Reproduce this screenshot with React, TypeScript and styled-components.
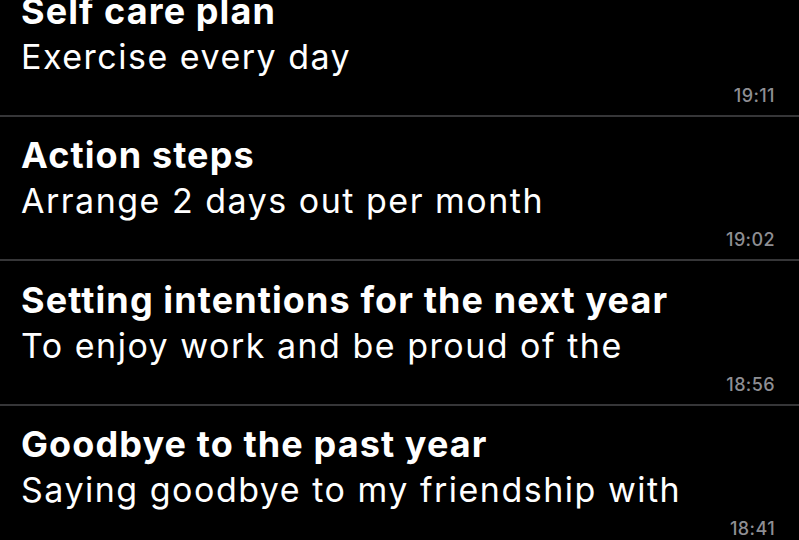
import React from 'react';
import styled, { createGlobalStyle } from 'styled-components';

type Note = {
  title: string;
  preview: string;
  time: string;
};

const notes: Note[] = [
  { title: 'Self care plan', preview: 'Exercise every day', time: '19:11' },
  { title: 'Action steps', preview: 'Arrange 2 days out per month', time: '19:02' },
  {
    title: 'Setting intentions for the next year',
    preview: 'To enjoy work and be proud of the',
    time: '18:56',
  },
  {
    title: 'Goodbye to the past year',
    preview: 'Saying goodbye to my friendship with',
    time: '18:41',
  },
];

function App() {
  return (
    <>
      <GlobalStyle />
      <Screen>
        <List>
          {notes.map(n => (
            <Row key={n.time}>
              <Title>{n.title}</Title>
              <Preview>{n.preview}</Preview>
              <Time>{n.time}</Time>
            </Row>
          ))}
        </List>
      </Screen>
    </>
  );
}

const GlobalStyle = createGlobalStyle`
  html, body {
    margin: 0;
    padding: 0;
    background: #000;
  }
  body {
    font-family: Inter, "Noto Sans", "Liberation Sans", sans-serif;
    -webkit-font-smoothing: antialiased;
  }
`;

const Screen = styled.div`
  width: 799px;
  height: 540px;
  overflow: hidden;
  background-color: #000;
`;

const List = styled.div`
  display: flex;
  flex-direction: column;
  margin-top: -28px;
`;

const Row = styled.div`
  display: flex;
  flex-direction: column;
  height: 144.5px;
  box-sizing: border-box;
  padding: 15.5px 24px 0 21px;
  border-bottom: 2px solid #363638;
`;

const Title = styled.div`
  color: #fff;
  font-size: 36px;
  font-weight: 700;
  line-height: 46px;
  letter-spacing: 1.1px;
  white-space: nowrap;
`;

const Preview = styled.div`
  color: #fff;
  font-size: 34px;
  font-weight: 400;
  line-height: 45px;
  letter-spacing: 1.5px;
  white-space: nowrap;
`;

const Time = styled.div`
  align-self: flex-end;
  margin-top: 6px;
  color: #8e8e93;
  font-size: 18px;
  line-height: 22px;
  font-weight: 500;
  letter-spacing: 0.4px;
`;

export default App;
